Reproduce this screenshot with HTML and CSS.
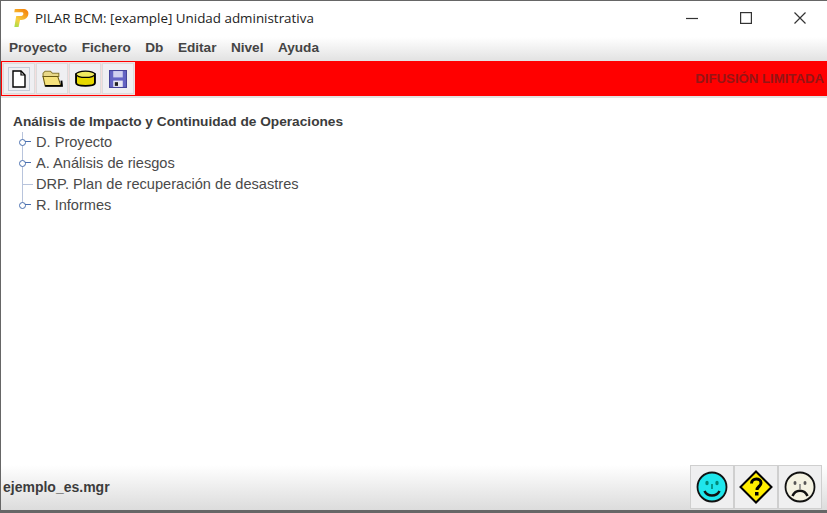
FILE: index.html
```html
<!DOCTYPE html>
<html lang="es">
<head>
  <meta charset="UTF-8" />
  <title>PILAR BCM</title>
  <link rel="stylesheet" href="styles.css">
</head>
<body>
<div class="window">
  <div class="titlebar">
    <svg class="app-logo" width="17" height="20" viewBox="0 0 18 20">
      <defs>
        <linearGradient id="logoGrad" x1="0" y1="1" x2="0.6" y2="0">
          <stop offset="0" stop-color="#9be04a"/>
          <stop offset="0.4" stop-color="#f7d040"/>
          <stop offset="1" stop-color="#f58a10"/>
        </linearGradient>
      </defs>
      <path d="M3 0.500h8.500c4 0 6.300 2.200 5.800 5.500s-3.300 6-7.300 6H8.500L7 19.500H2.500L4 10.500 4.500 8h4.300c1.700 0 3-.7 3.200-2.200S11 4 9.800 4H2.400z" fill="url(#logoGrad)"/>
    </svg>
    <span class="title-text">PILAR BCM: [example] Unidad administrativa</span>
    <div class="win-controls">
      <svg width="12" height="12" viewBox="0 0 12 12"><path d="M0 6.500h12" stroke="#333" stroke-width="1.200"/></svg>
      <svg width="12" height="12" viewBox="0 0 12 12"><rect x="0.600" y="0.600" width="10.800" height="10.800" fill="none" stroke="#333" stroke-width="1.200"/></svg>
      <svg width="12" height="12" viewBox="0 0 12 12"><path d="M0.500 0.500l11 11M11.500 0.500l-11 11" stroke="#333" stroke-width="1.200"/></svg>
    </div>
  </div>

  <div class="menubar">
    <span>Proyecto</span>
    <span>Fichero</span>
    <span>Db</span>
    <span>Editar</span>
    <span>Nivel</span>
    <span>Ayuda</span>
  </div>

  <div class="toolbar">
    <div class="tools">
      <button class="tool tool-active">
        <svg width="16" height="18" viewBox="0 0 16 18"><path d="M2 1h8l4 4v12H2z" fill="#fff" stroke="#000" stroke-width="1.400"/><path d="M10 1v4h4" fill="none" stroke="#000" stroke-width="1.200"/></svg>
      </button>
      <button class="tool">
        <svg width="21" height="17" viewBox="0 0 20 16"><path d="M1 3l2-2h5l2 2h6v3H1z" fill="#e8d888" stroke="#8a7a30"/><path d="M1 6h14l3 9H3z" fill="#f6e27c" stroke="#6a5a10"/><path d="M3 15h16l-.5-5" fill="none" stroke="#000" stroke-width="1.800"/></svg>
      </button>
      <button class="tool">
        <svg width="21" height="17" viewBox="0 0 20 16"><path d="M1 4v8c0 2 4 3 9 3s9-1 9-3V4z" fill="#e6d800" stroke="#000" stroke-width="1.800"/><ellipse cx="10" cy="4" rx="9" ry="3" fill="#f0ea60" stroke="#000" stroke-width="1.200"/></svg>
      </button>
      <button class="tool">
        <svg width="18" height="18" viewBox="0 0 17 17"><rect x="0.500" y="0.500" width="16" height="16" fill="#6464c4" stroke="#44449a"/><rect x="4" y="1" width="9" height="6" fill="#d0d0f0"/><rect x="4" y="10" width="9" height="6" fill="#e8e8f4"/><rect x="5.500" y="11.500" width="3" height="3.500" fill="#222"/></svg>
      </button>
    </div>
    <span class="marking">DIFUSIÓN LIMITADA</span>
  </div>

  <div class="content">
    <div class="tree-root">Análisis de Impacto y Continuidad de Operaciones</div>
    <ul class="tree">
      <li><i class="handle"></i>D. Proyecto</li>
      <li><i class="handle"></i>A. Análisis de riesgos</li>
      <li><i class="stub"></i>DRP. Plan de recuperación de desastres</li>
      <li><i class="handle"></i>R. Informes</li>
    </ul>
  </div>

  <div class="statusbar">
    <span class="filename">ejemplo_es.mgr</span>
    <div class="faces">
      <button class="face">
        <svg width="32" height="32" viewBox="0 0 32 32"><circle cx="16" cy="16" r="14.500" fill="#1fe6ec" stroke="#111" stroke-width="1.800"/><ellipse cx="11" cy="12" rx="1.700" ry="2.200" fill="#087"/><ellipse cx="21" cy="12" rx="1.700" ry="2.200" fill="#087"/><path d="M16 13v5" stroke="#087" stroke-width="1.600"/><path d="M8.500 20c3 6 12 6 15 0" fill="none" stroke="#111" stroke-width="2.600"/></svg>
      </button>
      <button class="face">
        <svg width="34" height="34" viewBox="0 0 34 34"><path d="M17 1.500L32.500 17 17 32.500 1.500 17z" fill="#ffee00" stroke="#000" stroke-width="2"/><path d="M12.500 13.500c0-6 9.500-6 9.500-.5 0 3.500-4 3.500-4 7" fill="none" stroke="#000" stroke-width="3"/><rect x="16" y="22" width="3.500" height="3.500" fill="#000"/></svg>
      </button>
      <button class="face">
        <svg width="32" height="32" viewBox="0 0 32 32"><circle cx="16" cy="16" r="14.500" fill="#f4f2e2" stroke="#111" stroke-width="1.800"/><ellipse cx="11" cy="12" rx="1.500" ry="2" fill="#555"/><ellipse cx="21" cy="12" rx="1.500" ry="2" fill="#555"/><path d="M16 13v5" stroke="#777" stroke-width="1.400"/><path d="M8.500 25c3-7 12-7 15 0" fill="none" stroke="#111" stroke-width="2.600"/></svg>
      </button>
    </div>
  </div>
</div>
</body>
</html>
```

FILE: styles.css
```css
html, body {
  margin: 0;
  padding: 0;
  height: 100%;
}

body {
  font-family: "Liberation Sans", Arial, sans-serif;
  color: #444;
  overflow: hidden;
}

.window {
  box-sizing: border-box;
  width: 827px;
  height: 513px;
  display: flex;
  flex-direction: column;
  background: #fff;
  border-left: 1px solid #666;
  border-top: 1px solid #666;
  border-bottom: 3px solid #666;
}

.titlebar {
  box-sizing: border-box;
  height: 36px;
  display: flex;
  align-items: center;
  padding-left: 11px;
  padding-bottom: 2px;
}

.app-logo {
  margin-right: 6px;
}

.title-text {
  font-family: "Open Sans", "Noto Sans", sans-serif;
  font-size: 13.400px;
  color: #222;
}

.win-controls {
  margin-left: auto;
  display: flex;
  gap: 42px;
  padding-right: 21px;
}

.menubar {
  box-sizing: border-box;
  height: 24px;
  display: flex;
  align-items: center;
  gap: 14.500px;
  padding-left: 8px;
  padding-bottom: 3px;
  font-size: 13.600px;
  font-weight: bold;
  color: #444;
  background: linear-gradient(#fff, #e2e2e2);
}

.toolbar {
  height: 35px;
  display: flex;
  align-items: center;
  justify-content: space-between;
  background: #ff0000;
  border-bottom: 2px solid #e2e2e2;
}

.tools {
  display: flex;
  gap: 1px;
  padding: 1px;
  margin-left: 1px;
  background: #f4dede;
}

.tool {
  width: 32px;
  height: 31px;
  padding: 0;
  display: flex;
  align-items: center;
  justify-content: center;
  background: #efeff2;
  border: 1px solid #dcdcdc;
}

.tool-active svg {
  outline: 1px solid #c4ccd8;
  outline-offset: 2px;
}

.marking {
  font-size: 13.200px;
  font-weight: bold;
  color: #951515;
  padding-right: 3px;
}

.content {
  flex: 1;
  padding: 13px 0 0 12px;
}

.tree-root {
  font-size: 13.700px;
  font-weight: bold;
  color: #3c3c3c;
  height: 21px;
  line-height: 21px;
}

.tree {
  list-style: none;
  margin: 0 0 0 9px;
  padding: 0;
  border-left: 1px solid #b8c4dc;
  height: 73px;
  width: 320px;
  font-size: 14.600px;
}

.tree li {
  height: 21px;
  line-height: 21px;
  display: flex;
  align-items: center;
  color: #4a4a4a;
}

.handle {
  position: relative;
  box-sizing: border-box;
  display: block;
  width: 7px;
  height: 7px;
  margin-left: -4px;
  margin-right: 10px;
  border: 1.500px solid #4a70b0;
  border-radius: 50%;
  background: #fff;
}

/* short branch line to the right of the handle */
.handle::after {
  content: "";
  position: absolute;
  left: 5px;
  top: 1px;
  width: 6px;
  height: 1px;
  background: #4a70b0;
}

.stub {
  display: block;
  width: 10px;
  height: 1px;
  margin-right: 3px;
  background: #b8c4dc;
}

.statusbar {
  height: 45px;
  display: flex;
  align-items: center;
  justify-content: space-between;
  padding: 0 5px 0 2px;
  background: linear-gradient(#fff, #dcdcdc);
}

.filename {
  font-size: 14px;
  font-weight: bold;
  color: #3c3c3c;
  position: relative;
  top: -1px;
}

.faces {
  display: flex;
  position: relative;
  top: -1px;
}

.face {
  width: 44px;
  height: 44px;
  padding: 0;
  display: flex;
  align-items: center;
  justify-content: center;
  background: #efeff0;
  border: 1px solid #cfcfcf;
}
```
